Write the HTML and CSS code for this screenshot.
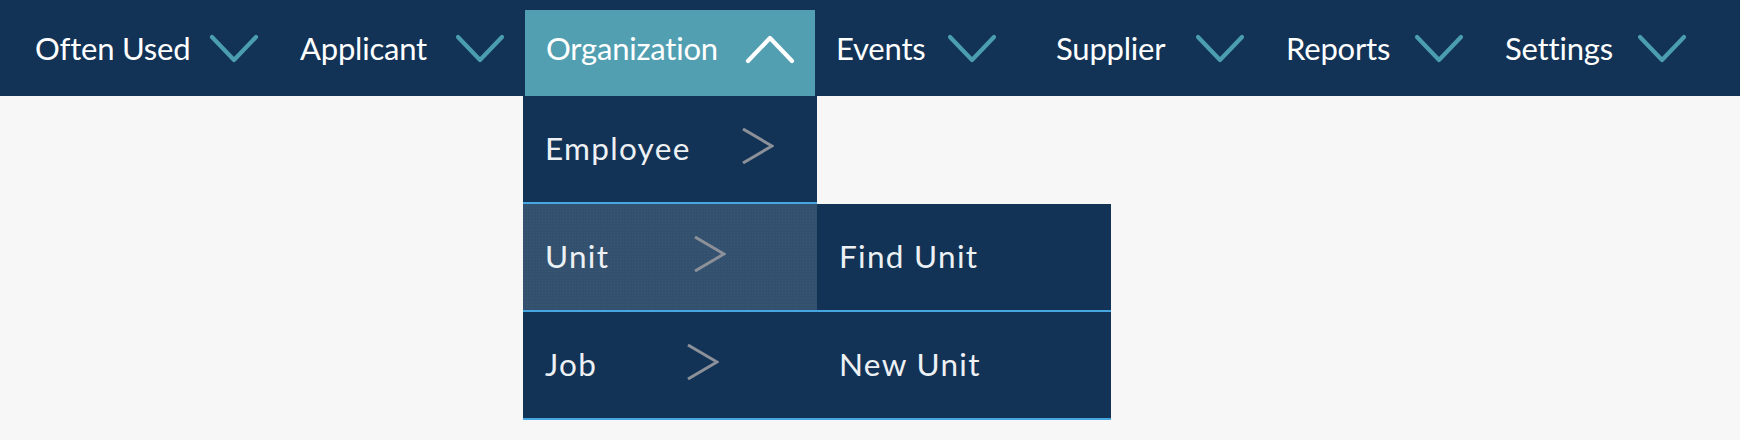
FILE: index.html
```html
<!DOCTYPE html>
<html lang="en">
<head>
<meta charset="utf-8">
<title>Menu</title>
<link rel="stylesheet" href="styles.css">
</head>
<body>
<nav class="topnav">
  <div class="nav-item nav-often">
    <span class="nav-label">Often Used</span>
    <svg class="caret" viewBox="0 0 50 30"><polyline points="3,3 25,26 47,3"/></svg>
  </div>
  <div class="nav-item nav-applicant">
    <span class="nav-label">Applicant</span>
    <svg class="caret" viewBox="0 0 50 30"><polyline points="3,3 25,26 47,3"/></svg>
  </div>
  <div class="nav-item nav-organization is-open">
    <span class="nav-label">Organization</span>
    <svg class="caret caret-up" viewBox="0 0 50 30"><polyline points="3,27 25,4 47,27"/></svg>
    <div class="dropdown">
      <div class="dd-row">
        <span class="dd-label dd-label-employee">Employee</span>
        <svg class="chev" viewBox="0 0 32 36"><polyline points="1,1 30,18 1,35"/></svg>
      </div>
      <div class="dd-row is-active">
        <span class="dd-label dd-label-unit">Unit</span>
        <svg class="chev" viewBox="0 0 32 36"><polyline points="1,1 30,18 1,35"/></svg>
        <div class="submenu">
          <div class="dd-row"><span class="dd-label">Find Unit</span></div>
          <div class="dd-row"><span class="dd-label">New Unit</span></div>
        </div>
      </div>
      <div class="dd-row">
        <span class="dd-label dd-label-job">Job</span>
        <svg class="chev" viewBox="0 0 32 36"><polyline points="1,1 30,18 1,35"/></svg>
      </div>
    </div>
  </div>
  <div class="nav-item nav-events">
    <span class="nav-label">Events</span>
    <svg class="caret" viewBox="0 0 50 30"><polyline points="3,3 25,26 47,3"/></svg>
  </div>
  <div class="nav-item nav-supplier">
    <span class="nav-label">Supplier</span>
    <svg class="caret" viewBox="0 0 50 30"><polyline points="3,3 25,26 47,3"/></svg>
  </div>
  <div class="nav-item nav-reports">
    <span class="nav-label">Reports</span>
    <svg class="caret" viewBox="0 0 50 30"><polyline points="3,3 25,26 47,3"/></svg>
  </div>
  <div class="nav-item nav-settings">
    <span class="nav-label">Settings</span>
    <svg class="caret" viewBox="0 0 50 30"><polyline points="3,3 25,26 47,3"/></svg>
  </div>
</nav>
<main class="page"></main>
</body>
</html>
```

FILE: styles.css
```css
html, body {
  margin: 0;
  padding: 0;
}

body {
  background: #f7f7f7;
  font-family: Lato, "Source Sans Pro", "Liberation Sans", sans-serif;
  color: #ffffff;
  height: 440px;
  overflow: hidden;
}

.topnav {
  display: flex;
  align-items: stretch;
  height: 96px;
  box-sizing: border-box;
  padding: 10px 0 0 14px;
  background: #123356;
}

.nav-item {
  position: relative;
  display: flex;
  align-items: center;
  justify-content: space-between;
  flex: none;
  box-sizing: border-box;
  padding: 0 20px 10px 21px;
  font-size: 31px;
  font-weight: 400;
  letter-spacing: -0.2px;
  line-height: 1;
  white-space: nowrap;
}

.nav-often { width: 265px; }
.nav-applicant { width: 246px; }
.nav-organization { width: 290px; }
.nav-events { width: 220px; padding-right: 38px; }
.nav-supplier { width: 230px; }
.nav-reports { width: 219px; }
.nav-settings { width: 223px; }

.nav-item.is-open {
  background: #529fb2;
}

.caret {
  width: 50px;
  height: 30px;
  flex: none;
  margin-top: 2px;
}

.caret polyline {
  fill: none;
  stroke: #4b9db0;
  stroke-width: 4.2;
  stroke-linecap: round;
  stroke-linejoin: round;
}

.caret-up polyline {
  stroke: #ffffff;
}

.dropdown {
  position: absolute;
  top: 100%;
  left: -2px;
  width: 294px;
  z-index: 5;
}

.dd-row {
  position: relative;
  display: flex;
  align-items: center;
  height: 106px;
  padding-left: 22px;
  background: #123356;
  border-bottom: 2px solid #46a6e2;
  font-size: 31.5px;
  font-weight: 400;
  letter-spacing: 1.3px;
  color: #eef1f4;
}

.dd-row.is-active {
  background-color: #33516f;
  background-image: radial-gradient(rgba(255, 255, 255, 0.04) 0.6px, transparent 0.8px);
  background-size: 3px 3px;
}

.dd-label-employee { width: 197px; }
.dd-label-unit { width: 149px; }
.dd-label-job { width: 142px; }

.chev {
  width: 32px;
  height: 36px;
  flex: none;
  margin-bottom: 6px;
}

.chev polyline {
  fill: none;
  stroke: #8b9099;
  stroke-width: 3;
}

.submenu {
  position: absolute;
  top: 0;
  left: 100%;
  width: 294px;
}

.submenu .dd-row {
  background: #123356;
}

.page {
  display: block;
}
```
